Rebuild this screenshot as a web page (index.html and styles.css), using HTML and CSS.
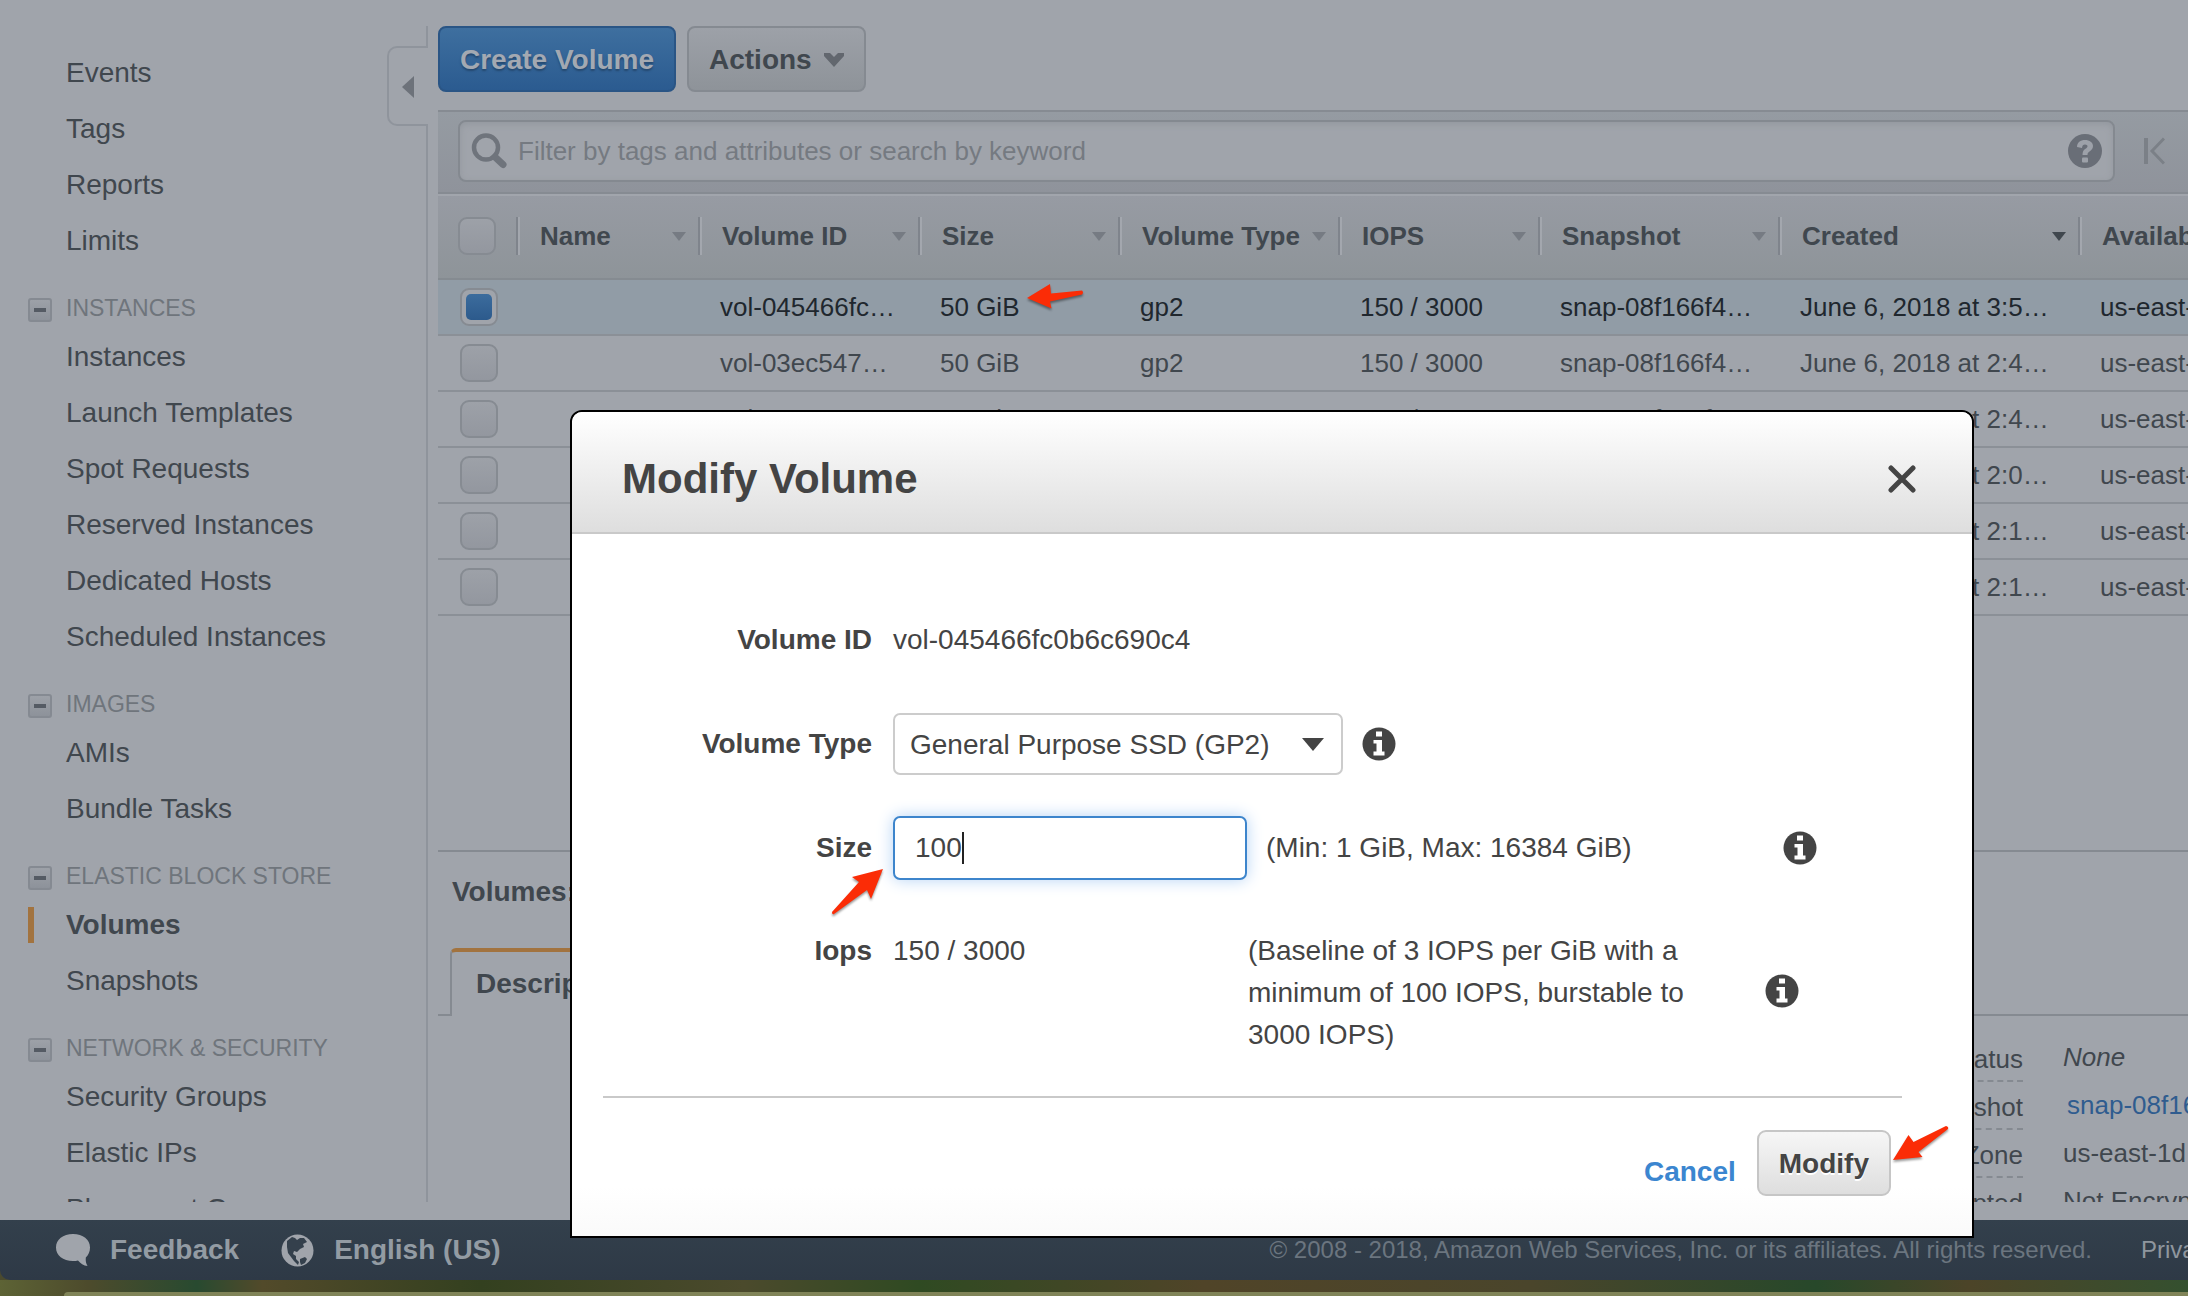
FILE: index.html
```html
<!DOCTYPE html>
<html lang="en">
<head>
<meta charset="utf-8">
<title>Volumes | EC2 Management Console</title>
<link rel="stylesheet" href="styles.css">
</head>
<body>
<svg class="sprite" aria-hidden="true">
  <symbol id="info" viewBox="0 0 34 34">
    <circle cx="17" cy="17" r="16.500" fill="#444"/>
    <path fill="#fff" d="M14 4.500h6v5h-6zM11.500 13h8.500v11.500h2.500V28.500h-11V24.500h3V16.500h-3z"/>
  </symbol>
</svg>
<div class="app">
  <div class="workspace">
    <nav class="sidebar" aria-label="EC2">
      <div class="sidebar-scroll">
        <ul class="nav-list">
          <li><a href="#">EC2 Dashboard</a></li>
          <li><a href="#">Events</a></li>
          <li><a href="#">Tags</a></li>
          <li><a href="#">Reports</a></li>
          <li><a href="#">Limits</a></li>
        </ul>
        <h2 class="nav-heading"><button class="fold" type="button" aria-label="Collapse Instances"></button>INSTANCES</h2>
        <ul class="nav-list">
          <li><a href="#">Instances</a></li>
          <li><a href="#">Launch Templates</a></li>
          <li><a href="#">Spot Requests</a></li>
          <li><a href="#">Reserved Instances</a></li>
          <li><a href="#">Dedicated Hosts</a></li>
          <li><a href="#">Scheduled Instances</a></li>
        </ul>
        <h2 class="nav-heading"><button class="fold" type="button" aria-label="Collapse Images"></button>IMAGES</h2>
        <ul class="nav-list">
          <li><a href="#">AMIs</a></li>
          <li><a href="#">Bundle Tasks</a></li>
        </ul>
        <h2 class="nav-heading"><button class="fold" type="button" aria-label="Collapse Elastic Block Store"></button>ELASTIC BLOCK STORE</h2>
        <ul class="nav-list">
          <li><a class="current" href="#">Volumes</a></li>
          <li><a href="#">Snapshots</a></li>
        </ul>
        <h2 class="nav-heading"><button class="fold" type="button" aria-label="Collapse Network and Security"></button>NETWORK &amp; SECURITY</h2>
        <ul class="nav-list">
          <li><a href="#">Security Groups</a></li>
          <li><a href="#">Elastic IPs</a></li>
          <li><a href="#">Placement Groups</a></li>
        </ul>
      </div>
      <button class="collapse" type="button" aria-label="Hide navigation">
        <svg width="12" height="22" viewBox="0 0 12 22"><path d="M12 0v22L0 11z" fill="#6d727a"/></svg>
      </button>
    </nav>

    <main class="main">
      <div class="toolbar">
        <button class="btn btn-primary" type="button">Create Volume</button>
        <button class="btn" type="button">Actions
          <svg width="20" height="14" viewBox="0 0 20 14"><path d="M0 0h6l4 4 4-4h6v3L10 14 0 3z" fill="#62676e"/></svg>
        </button>
      </div>

      <div class="filter">
        <div class="search">
          <svg width="36" height="36" viewBox="0 0 36 36" fill="none" stroke="#6f747c"><circle cx="15" cy="14.500" r="12" stroke-width="4.500"/><path d="M24 24l8 7.500" stroke-width="7" stroke-linecap="round"/></svg>
          <input type="text" aria-label="Filter volumes" placeholder="Filter by tags and attributes or search by keyword">
          <svg width="34" height="34" viewBox="0 0 34 34"><circle cx="17" cy="17" r="17" fill="#696e77"/><path d="M9 13c0-4.500 3.500-7 8-7s8 2.400 8 6c0 3-1.800 4.200-3.500 5.400-1.500 1-2 1.600-2 3.600h-5c0-3.500 1-4.800 3-6.200 1.300-.9 2-1.400 2-2.500 0-1.200-1-1.900-2.500-1.900-1.800 0-2.800 1.100-3 3.600z" fill="#9da1a9"/><rect x="14" y="23.500" width="6" height="5" rx="1" fill="#9da1a9"/></svg>
        </div>
        <button class="first-page" type="button" aria-label="First page">
          <svg width="22" height="28" viewBox="0 0 22 28" fill="none" stroke="#7b8087" stroke-width="4"><path d="M3 1v26"/><path d="M21 1.500L9 14l12 12.500" stroke-width="3"/></svg>
        </button>
      </div>

      <div class="grid-wrap">
        <table class="grid">
          <colgroup><col class="c-check"><col class="c-name"><col class="c-md"><col class="c-sm"><col class="c-md"><col class="c-sm"><col class="c-snap"><col class="c-date"><col class="c-date"></colgroup>
          <thead>
            <tr>
              <th><input type="checkbox" aria-label="Select all"></th>
              <th><span class="th">Name</span></th>
              <th><span class="th">Volume ID</span></th>
              <th><span class="th">Size</span></th>
              <th><span class="th">Volume Type</span></th>
              <th><span class="th">IOPS</span></th>
              <th><span class="th">Snapshot</span></th>
              <th><span class="th sorted">Created</span></th>
              <th><span class="th">Availability Zone</span></th>
            </tr>
          </thead>
          <tbody>
            <tr class="selected">
              <td><input type="checkbox" aria-label="Select vol-045466fc" checked></td><td></td><td>vol-045466fc…</td>
              <td class="marked">50 GiB<svg class="arrow arrow-row" viewBox="0 0 58 26"><path d="M1 15L24 1l1 9.500L56 7.500q2 2 0 4L24 18.500l1.500 7z"/></svg></td>
              <td>gp2</td><td>150 / 3000</td><td>snap-08f166f4…</td><td>June 6, 2018 at 3:5…</td><td>us-east-1d</td>
            </tr>
            <tr><td><input type="checkbox" aria-label="Select vol-03ec547"></td><td></td><td>vol-03ec547…</td><td>50 GiB</td><td>gp2</td><td>150 / 3000</td><td>snap-08f166f4…</td><td>June 6, 2018 at 2:4…</td><td>us-east-1d</td></tr>
            <tr><td><input type="checkbox" aria-label="Select vol-0207184"></td><td></td><td>vol-0207184…</td><td>50 GiB</td><td>gp2</td><td>150 / 3000</td><td>snap-08f166f4…</td><td>June 6, 2018 at 2:4…</td><td>us-east-1d</td></tr>
            <tr><td><input type="checkbox" aria-label="Select row 4"></td><td></td><td></td><td></td><td></td><td></td><td></td><td>June 6, 2018 at 2:0…</td><td>us-east-1d</td></tr>
            <tr><td><input type="checkbox" aria-label="Select row 5"></td><td></td><td></td><td></td><td></td><td></td><td></td><td>June 6, 2018 at 2:1…</td><td>us-east-1d</td></tr>
            <tr><td><input type="checkbox" aria-label="Select row 6"></td><td></td><td></td><td></td><td></td><td></td><td></td><td>June 6, 2018 at 2:1…</td><td>us-east-1d</td></tr>
          </tbody>
        </table>
      </div>

      <section class="details">
        <h2 class="details-title">Volumes:</h2>
        <div class="tabs"><button class="tab" type="button">Description</button></div>
        <dl class="facts">
          <dt><span>Alarm status</span></dt><dd><em>None</em></dd>
          <dt><span>Snapshot</span></dt><dd><a href="#">snap-08f166f4</a></dd>
          <dt><span>Availability Zone</span></dt><dd>us-east-1d</dd>
          <dt><span>Encrypted</span></dt><dd>Not Encrypted</dd>
        </dl>
      </section>
    </main>
  </div>

  <footer class="footer">
    <a class="footer-link" href="#">
      <svg width="34" height="32" viewBox="0 0 34 32"><path d="M17 0C7 0 0 5.500 0 13.500S7 27 17 27c2 0 3.500-.2 5-.6 2.500 3 5.500 5 9.500 5.600-1.500-2.500-2-5-1.700-8.500C32.500 21 34 17.500 34 13.500 34 5.500 27 0 17 0z" fill="#a0a4ab"/></svg>
      Feedback</a>
    <a class="footer-link" href="#">
      <svg width="33" height="33" viewBox="0 0 33 33"><circle cx="16.500" cy="16.500" r="16" fill="#a0a4ab"/><path d="M6 7l5-4 3 1 2 2 3-2 4 0 3 4-4 2 1 3-4 2-3 3-3-1-1 3 3 2 0 3 3 3-1 3-4-4-3-4-3-4-1-6zM19 25l5-2 2 2-2 4-4 2-1-3z" fill="#34404c"/></svg>
      English (US)</a>
    <span class="copyright">© 2008 - 2018, Amazon Web Services, Inc. or its affiliates. All rights reserved.</span>
    <a class="privacy" href="#">Privacy Policy</a>
  </footer>
  <div class="desktop"><div class="dock"></div></div>
</div>

<div class="modal" role="dialog" aria-labelledby="modal-title">
  <header class="modal-head">
    <h1 id="modal-title">Modify Volume</h1>
    <button class="close" type="button" aria-label="Close">
      <svg width="28" height="28" viewBox="0 0 28 28"><path d="M3 3l22 22M25 3L3 25" stroke="#444" stroke-width="5" stroke-linecap="round"/></svg>
    </button>
  </header>
  <form class="modal-body">
    <div class="field"><span class="label">Volume ID</span><span>vol-045466fc0b6c690c4</span></div>
    <div class="field">
      <label class="label" for="type">Volume Type</label>
      <span class="select"><select id="type"><option>General Purpose SSD (GP2)</option></select></span>
      <svg class="info"><use href="#info"/></svg>
    </div>
    <div class="field">
      <label class="label" for="size">Size<svg class="arrow arrow-size" viewBox="0 0 54 48"><path d="M52 1L21 9l7 5L1 44q0 3 2 2L36 22l4 9z"/></svg></label>
      <span class="size-box"><input id="size" type="text" value="100"><span class="caret"></span></span>
      <span class="hint">(Min: 1 GiB, Max: 16384 GiB)</span>
      <svg class="info"><use href="#info"/></svg>
    </div>
    <div class="field field-iops">
      <span class="label">Iops</span>
      <span class="iops">150 / 3000</span>
      <span class="baseline">(Baseline of 3 IOPS per GiB with a minimum of 100 IOPS, burstable to 3000 IOPS)</span>
      <svg class="info"><use href="#info"/></svg>
    </div>
    <div class="modal-actions">
      <a class="cancel" href="#">Cancel</a>
      <span class="modify-wrap">
        <button class="modify" type="button">Modify</button>
        <svg class="arrow arrow-modify" viewBox="0 0 58 36"><path d="M1 35L16.500 10l5 7L54 1q3 1 2 3L26.500 27l4 5z"/></svg>
      </span>
    </div>
  </form>
</div>
</body>
</html>
```
FILE: styles.css
```css
* { box-sizing: border-box; }
body {
  margin: 0;
  overflow: hidden;
  background: #4a4a2e;
  color: #40474e;
  font-family: "Liberation Sans", Arial, sans-serif;
  font-size: 26px;
}
button, input, select { font: inherit; color: inherit; }
button { cursor: pointer; }
a { color: inherit; text-decoration: none; }
ul, dl, dd, h1, h2 { margin: 0; padding: 0; }
ul { list-style: none; }
svg { flex: none; }
.sprite { position: absolute; width: 0; height: 0; }

.app { display: flex; flex-direction: column; height: 100vh; }
.workspace {
  flex: 1;
  min-height: 0;
  display: flex;
  padding: 26px 0 18px;
  background: #a0a4ab;
}

/* Navigation */
.sidebar { position: relative; flex: none; width: 428px; margin-right: 10px; border-right: 2px solid #8f949c; }
.sidebar-scroll { height: 100%; overflow: hidden; font-size: 28px; }
.sidebar-scroll > :first-child { margin-top: -37px; }
.nav-list a { display: block; height: 56px; padding-left: 66px; line-height: 56px; }
.nav-list .current {
  font-weight: bold;
  background: linear-gradient(#a2733f, #a2733f) 28px center / 6px 36px no-repeat;
}
.nav-heading {
  display: flex;
  align-items: center;
  gap: 14px;
  height: 60px;
  padding: 18px 0 0 28px;
  font-size: 23px;
  font-weight: normal;
  color: #6f757c;
}
.fold {
  width: 24px;
  height: 24px;
  margin-top: 4px;
  padding: 0;
  border: 2px solid #858a92;
  border-radius: 3px;
  background: linear-gradient(#555b64, #555b64) center / 12px 4px no-repeat, linear-gradient(#9da1a8, #8d929a);
}
.collapse {
  position: absolute;
  top: 20px;
  right: -2px;
  display: grid;
  place-items: center;
  width: 41px;
  height: 80px;
  padding: 2px 1px 0 0;
  border: 2px solid #8f949c;
  border-right: 0;
  border-radius: 10px 0 0 10px;
  background: #a0a4ab;
}

/* Main column */
.main { flex: 1; min-width: 0; display: flex; flex-direction: column; }
.toolbar { display: flex; gap: 11px; padding-bottom: 18px; }
.btn {
  display: flex;
  align-items: center;
  gap: 12px;
  height: 66px;
  padding: 2px 20px 0;
  border: 2px solid #858a91;
  border-radius: 8px;
  background: linear-gradient(#9da1a8, #8e9399);
  font-size: 28px;
  font-weight: bold;
}
.btn-primary { border-color: #2a5585; background: linear-gradient(#3e6f9f, #2b5b90); color: #a3a9b2; text-shadow: 0 2px 2px #24486f; }
.filter {
  display: flex;
  align-items: center;
  gap: 28px;
  height: 84px;
  padding: 0 20px 2px;
  border-top: 2px solid #868b92;
  border-bottom: 2px solid #868b92;
  background: linear-gradient(#959ba2, #8f939b);
}
.search {
  flex: 1;
  display: flex;
  align-items: center;
  gap: 11px;
  height: 62px;
  padding: 0 11px;
  border: 2px solid #848990;
  border-radius: 8px;
  background: #a0a4ab;
  box-shadow: inset 0 2px 6px #92979e;
}
.search input { flex: 1; min-width: 0; padding: 0; border: 0; outline: 0; background: none; }
.search input::placeholder { color: #757a81; opacity: 1; }
.first-page { display: flex; padding: 0; margin-right: 3px; border: 0; background: none; }

/* Volume table */
.grid-wrap { flex: 1; min-height: 0; overflow: hidden; }
.grid { table-layout: fixed; width: 100%; min-width: 1940px; border-collapse: separate; border-spacing: 0; }
.c-check { width: 78px; }
.c-name { width: 182px; }
.c-md { width: 220px; }
.c-sm { width: 200px; }
.c-snap { width: 240px; }
.c-date { width: 300px; }
.grid th { height: 86px; padding: 0 0 2px; border-top: 2px solid #a1a5ac; border-bottom: 2px solid #858b91; background: linear-gradient(#979ba3, #8e9499); text-align: left; }
.th {
  display: flex;
  align-items: center;
  justify-content: space-between;
  height: 38px;
  padding: 0 12px 0 22px;
  border-left: 2px solid #7f848c;
  box-shadow: inset 2px 0 #a3a7ae;
  white-space: nowrap;
}
.th::after { content: ""; border: 7px solid transparent; border-top: 9px solid #767b83; border-bottom: 0; }
.sorted::after { border-top-color: #40474e; }
.grid td { height: 56px; padding: 0 0 0 22px; border-bottom: 2px solid #8b9097; white-space: nowrap; overflow: hidden; }
.grid .selected td { background: #919ca6; color: #20272e; }
.grid .marked { position: relative; overflow: visible; }
.grid input {
  appearance: none;
  display: block;
  width: 38px;
  height: 38px;
  margin: 0;
  border: 2px solid #868b92;
  border-radius: 9px;
  background: linear-gradient(#9da1a8, #93979f);
}
.grid th input { margin-left: 20px; }
.grid input:checked { position: relative; background: #a0a4ab; }
.grid input:checked::after { content: ""; position: absolute; inset: 4px; border-radius: 5px; background: linear-gradient(#3c6c9d, #2c5a8c); }

/* Details pane */
.details { height: 352px; overflow: hidden; border-top: 2px solid #858a91; }
.details-title { padding-left: 14px; font-size: 28px; line-height: 80px; }
.tabs { display: flex; margin-top: 16px; }
.tabs::before { content: ""; width: 12px; border-bottom: 2px solid #858a91; }
.tabs::after { content: ""; flex: 1; border-bottom: 2px solid #858a91; }
.tab {
  height: 68px;
  padding: 0 24px;
  border: 2px solid #858a91;
  border-top: 4px solid #a2733f;
  border-bottom: 0;
  border-radius: 6px 6px 0 0;
  background: none;
  font-size: 28px;
  font-weight: bold;
}
.facts { display: grid; grid-template-columns: 1fr 125px; gap: 4px 40px; padding-top: 22px; white-space: nowrap; }
.facts dt { text-align: right; line-height: 42px; }
.facts dt span { display: inline-block; border-bottom: 2px dashed #858a91; }
.facts dd { line-height: 38px; }
.facts a { padding-left: 4px; color: #2f5c8f; }

/* Footer */
.footer {
  display: flex;
  align-items: center;
  gap: 42px;
  height: 60px;
  padding-left: 56px;
  border-radius: 0 0 0 10px;
  background: linear-gradient(#33404c, #2e3946);
  color: #6b757f;
  font-size: 24px;
  white-space: nowrap;
}
.footer-link { display: flex; align-items: center; gap: 20px; font-size: 28px; font-weight: bold; color: #939ba3; }
.copyright { margin-left: auto; }
.privacy { width: 54px; padding-left: 7px; overflow: hidden; color: #8f969e; }
.desktop { height: 16px; padding: 12px 0 0 64px; background: linear-gradient(90deg, #5d6335, #4d4b2c 4%, #284a30 9%, #524a2a 12%, #33401f 22%, #4b4a2c 34%, #2f4a22 42%, #504428 55%, #4a452b 70%, #27482a 83%, #4c4428 90%, #34502f); }
.dock { height: 4px; border-radius: 6px 0 0 0; background: #808458; }

/* Dialog */
.modal {
  position: absolute;
  top: 410px;
  left: 570px;
  width: 1404px;
  border: 2px solid #000;
  border-radius: 12px 12px 0 0;
  background: linear-gradient(#fff 94%, #fafafa);
  color: #444;
  font-size: 28px;
}
.modal-head {
  display: flex;
  align-items: center;
  justify-content: space-between;
  height: 122px;
  padding: 13px 56px 0 50px;
  border-bottom: 2px solid #c9c9c9;
  border-radius: 10px 10px 0 0;
  background: linear-gradient(#fff, #dedede);
}
.modal-head h1 { font-size: 42px; }
.close { display: flex; padding: 0; border: 0; background: none; }
.modal-body { display: flex; flex-direction: column; gap: 40px; padding: 74px 0 40px; }
.field { display: flex; align-items: center; height: 64px; }
.label { position: relative; width: 300px; margin-right: 21px; text-align: right; font-weight: bold; }
.info { width: 34px; height: 34px; }
.select { position: relative; margin-right: 19px; }
.select::after { content: ""; position: absolute; top: 25px; right: 19px; border: 11px solid transparent; border-top: 13px solid #444; border-bottom: 0; pointer-events: none; }
.select select { appearance: none; width: 450px; height: 62px; padding: 0 15px; border: 2px solid #ccc; border-radius: 7px; background: #fff; }
.size-box { position: relative; margin-right: 19px; }
.size-box input { display: block; width: 354px; height: 64px; padding: 0 20px; border: 2px solid #3d85cc; border-radius: 7px; outline: 0; background: #fff; box-shadow: 0 0 16px #b5d3f5; }
.caret { position: absolute; top: 16px; left: 69px; width: 2px; height: 32px; background: #222; }
.hint { width: 517px; }
.field-iops { align-items: flex-start; height: 132px; padding-top: 10px; line-height: 42px; }
.iops { width: 355px; }
.baseline { width: 480px; margin-right: 37px; }
.field-iops .info { align-self: center; }
.modal-actions {
  display: flex;
  align-items: flex-start;
  justify-content: flex-end;
  gap: 21px;
  margin: 4px 70px 0 31px;
  padding: 32px 11px 0 0;
  border-top: 2px solid #c9c9c9;
}
.cancel { padding-top: 26px; font-weight: bold; color: #3b86d0; }
.modify-wrap { position: relative; }
.modify {
  height: 66px;
  padding: 2px 20px 0;
  border: 2px solid #c6c6c6;
  border-radius: 9px;
  background: linear-gradient(#f6f6f6, #dedede);
  font-weight: bold;
  text-shadow: 0 2px #fff;
}

/* Callout arrows */
.arrow { position: absolute; fill: #fb2c06; filter: drop-shadow(0 2px 1px rgba(0, 0, 0, .4)); }
.arrow-row { top: 3px; left: 108px; width: 58px; height: 26px; }
.arrow-size { top: 36px; right: -13px; width: 54px; height: 48px; }
.arrow-modify { top: -5px; left: 135px; width: 58px; height: 36px; }
```
